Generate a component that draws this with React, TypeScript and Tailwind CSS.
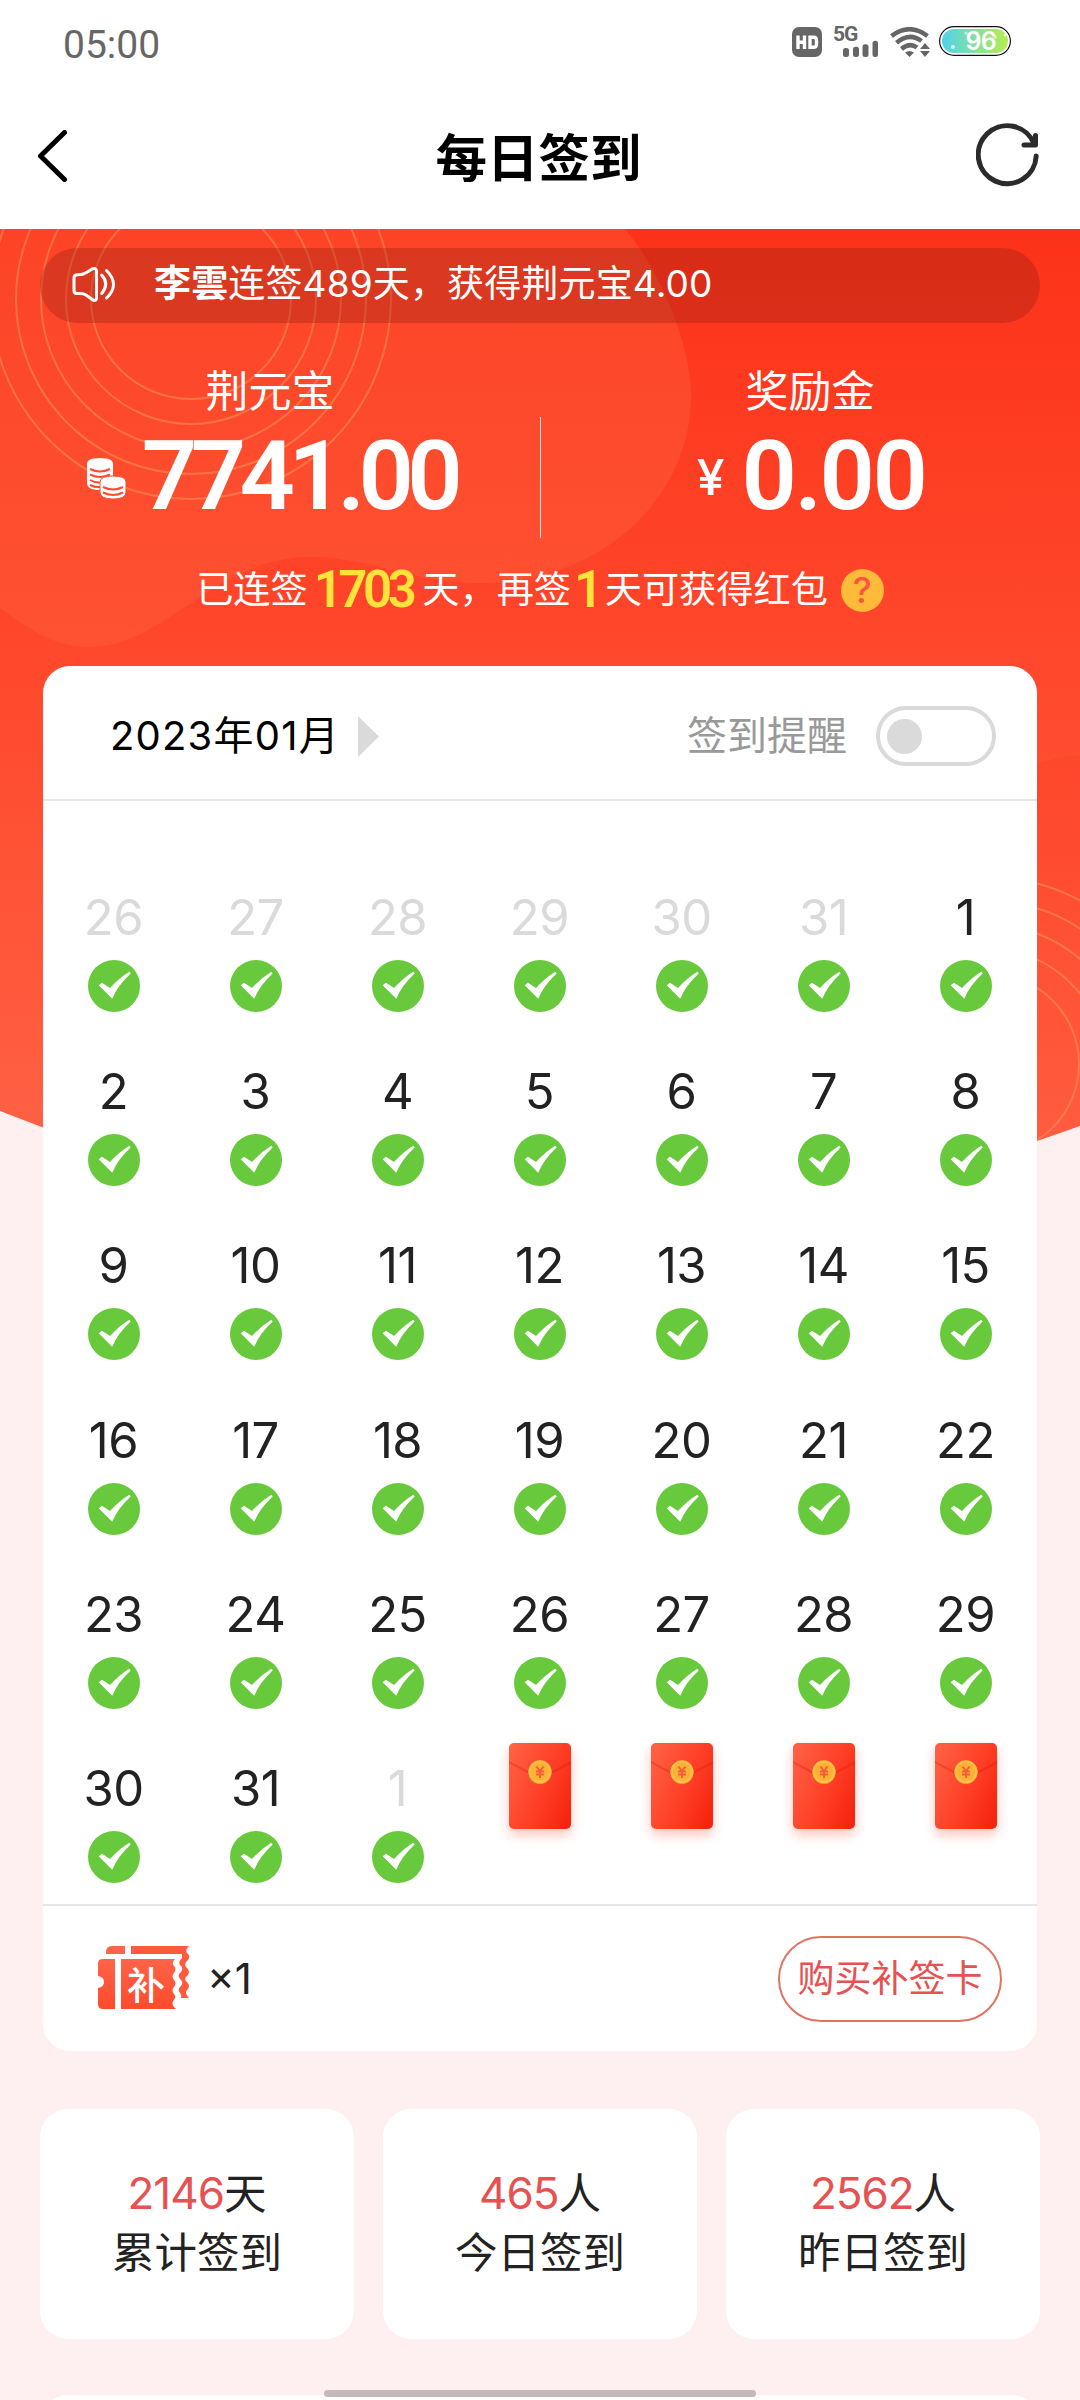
import { clsx } from 'clsx'

interface Day {
  label: string
  muted?: boolean
}

interface Stat {
  value: string
  unit: string
  label: string
}

const days: Day[] = [
  ...[26, 27, 28, 29, 30, 31].map((d) => ({ label: String(d), muted: true })),
  ...Array.from({ length: 31 }, (_, i) => ({ label: String(i + 1) })),
  { label: '1', muted: true },
]

const stats: Stat[] = [
  { value: '2146', unit: '天', label: '累计签到' },
  { value: '465', unit: '人', label: '今日签到' },
  { value: '2562', unit: '人', label: '昨日签到' },
]

function StatusBar() {
  return (
    <div className="flex h-[88px] items-start justify-between pr-[69px] pl-[63px]">
      <span className="mt-[23px] font-['Roboto'] text-[39px] leading-[44px] text-[#666]">05:00</span>
      <div className="mt-[26px] flex items-start">
        <svg width="30" height="30" viewBox="0 0 30 30" className="mt-px mr-[12px]">
          <rect width="30" height="30" rx="7" fill="#666" />
          <path d="M6 8.500v13.500M6 15.200h6.500M12.500 8.500v13.500M18 10.200h3.500q3 0 3 3v4q0 3-3 3H18z" fill="none" stroke="#fff" strokeWidth="3.400" />
        </svg>
        <div className="relative mt-px mr-[12px] h-[30px] w-[44px]">
          <span className="absolute top-[-3px] left-[-1px] font-['Roboto'] text-[21px] leading-[21px] font-bold tracking-[-1px] text-[#666]">5G</span>
          <svg width="44" height="30" viewBox="0 0 44 30" className="absolute inset-0" fill="#666">
            <rect x="9" y="21" width="6" height="9" rx="2.500" />
            <rect x="19" y="19.700" width="6" height="10.300" rx="2.500" />
            <rect x="28.500" y="17.300" width="6" height="12.700" rx="2.500" />
            <rect x="38.500" y="13.700" width="5.500" height="16.300" rx="2.500" />
          </svg>
        </div>
        <svg width="40" height="30" viewBox="0 0 40 30" className="mt-px mr-[9px]">
          <g fill="none" stroke="#666" strokeWidth="4.600">
            <path d="M1.500 9Q19.500-4.500 37.500 9" />
            <path d="M6.500 15.800Q19.500 4.800 31.500 14" />
            <path d="M11.500 22Q19.500 15 27 20.500" />
          </g>
          <path d="M15 25.500q4.500-3 9 0L19.500 30z" fill="#666" />
          <path d="M35 16l5 6h-10zM35 30l-5-6h10z" fill="#666" />
        </svg>
        <svg width="72" height="30" viewBox="0 0 72 30" className="overflow-visible">
          <defs>
            <linearGradient id="battery" x1="0" x2="1">
              <stop offset="0" stopColor="#4fd3ea" />
              <stop offset="0.5" stopColor="#86dfa0" />
              <stop offset="1" stopColor="#b5ec52" />
            </linearGradient>
          </defs>
          <rect x="0.600" y="0.600" width="70.800" height="28.800" rx="14.400" fill="#fff" stroke="#111" strokeWidth="1.200" />
          <rect x="3" y="3" width="66" height="24" rx="12" fill="url(#battery)" />
          <circle cx="14" cy="21" r="2" fill="#fff" opacity=".8" />
          <circle cx="27" cy="7" r="1.500" fill="#fff" opacity=".6" />
          <circle cx="56" cy="11" r="2" fill="#fff" opacity=".5" />
          <circle cx="66" cy="9" r="1.500" fill="#fff" opacity=".7" />
          <text x="26.500" y="24" fill="#fff" fontFamily="Inter" fontWeight="600" fontSize="25" letterSpacing="-0.8">96</text>
        </svg>
      </div>
    </div>
  )
}

function TitleBar() {
  return (
    <div className="flex h-[141px] items-start justify-between pr-[40px] pl-[37px]">
      <svg width="64" height="52" viewBox="0 0 64 52" className="mt-[42px]">
        <path d="M27.500 2.500L3.500 26l24 23.500" fill="none" stroke="#000" strokeWidth="5" strokeLinecap="round" strokeLinejoin="round" />
      </svg>
      <h1 className="mt-[35px] text-[51.5px] leading-[70px] font-bold text-black">每日签到</h1>
      <svg width="64" height="66" viewBox="0 0 64 66" className="mt-[35px]" fill="none" stroke="#2b2b2b" strokeWidth="5" strokeLinecap="round">
        <path d="M60.200 33A29 29 0 1 1 58 20.500" />
        <path d="M59.500 12.500V22H48" strokeLinejoin="round" />
      </svg>
    </div>
  )
}

function Backdrop() {
  return (
    <svg width="1080" height="930" viewBox="0 229 1080 930" className="absolute top-0 left-0">
      <defs>
        <linearGradient id="red" x1="0" y1="0" x2="0" y2="1">
          <stop offset="0" stopColor="#fc3218" />
          <stop offset="0.450" stopColor="#ff492d" />
          <stop offset="1" stopColor="#ff6649" />
        </linearGradient>
        <linearGradient id="shade" x1="0" y1="0" x2="0" y2="1">
          <stop offset="0" stopColor="#fd3d24" />
          <stop offset="1" stopColor="#ff5538" />
        </linearGradient>
      </defs>
      <path d="M0 229H1080V1126Q810 1240 540 1240T0 1111z" fill="url(#red)" />
      <path d="M1080 755Q1050 757 1020 770V1150L1080 1126z" fill="url(#shade)" opacity=".4" />
      <path d="M0 229H625C660 270 691 345 691 395C691 500 600 583 480 583C410 583 370 557 310 557C215 557 165 647 90 647C50 647 25 625 0 608z" fill="#ff6a45" opacity=".32" />
      <g fill="none" stroke="#ff9a5c" strokeWidth="2" opacity=".5">
        {[100, 125, 150, 175, 200].map((r) => (
          <circle key={r} cx="191" cy="299" r={r} />
        ))}
        {[90, 115, 139, 163, 187].map((r) => (
          <circle key={r} cx="989" cy="1064" r={r} />
        ))}
      </g>
      <path d="M0 1111L60 1134V1160H0zM1080 1126L1020 1147V1160H1080z" fill="#fef0f0" />
    </svg>
  )
}

function Notice() {
  return (
    <div className="mx-[40px] flex h-[75px] items-center rounded-full bg-[#991f14]/35 pl-[31px] text-[37px] leading-[54px] text-white">
      <svg width="46" height="38" viewBox="0 0 46 38" fill="none" stroke="#fff" strokeWidth="3" strokeLinejoin="round" strokeLinecap="round">
        <path d="M3 11q0-3 3-3.200Q12 8 15.500 5.500L21.500 1.800Q25.500 0.500 25.500 4V31Q25.500 34.500 22 33L15 28Q13 26.500 9 26.500H6Q3 26.500 3 23.500z" />
        <path d="M30.700 8q8 9 0 18.500M35.500 3.500q14 14 0 27.500" />
      </svg>
      <p className="-mt-[3px] ml-[37px] tracking-[0.15px] whitespace-nowrap">
        <b>李雲</b>连签489天，获得荆元宝4.00
      </p>
    </div>
  )
}

function CoinsIcon() {
  return (
    <svg width="40" height="42" viewBox="0 0 40 42" className="mt-[5px]">
      <path d="M0 6Q0 0 13 0T26 6V24Q26 32 13 32T0 25z" fill="#fff" />
      <path d="M3 11q10 5 20 0M3 16.500q10 5 20 0M3 22q5 3 11 2.500M3 27q5 2.500 10 2" fill="none" stroke="#ff4b2e" strokeWidth="2" />
      <path d="M13 24Q13 18 26 18T39 24V34Q39 41 26 41T13 34z" fill="#fff" stroke="#ff4b2e" strokeWidth="1" />
      <path d="M16 29q10 5 20 0M16 34.500q10 5 20 0" fill="none" stroke="#ff4b2e" strokeWidth="2" />
    </svg>
  )
}

function Balance() {
  return (
    <div className="relative grid h-[214px] grid-cols-2 pt-[41px] text-center text-white">
      <div>
        <div className="text-[43px] leading-[54px]">荆元宝</div>
        <div className="flex items-center justify-center pt-[12px]">
          <CoinsIcon />
          <span className="-mr-[3px] ml-[15px] font-['Roboto'] text-[97px] leading-[92px] font-semibold tracking-[-6.5px]">7741.00</span>
        </div>
      </div>
      <div>
        <div className="text-[43px] leading-[54px]">奖励金</div>
        <div className="flex items-center justify-center pt-[12px]">
          <span className="mt-[2px] text-[50px] leading-[60px] font-medium">¥</span>
          <span className="-mr-[2px] ml-[17px] font-['Roboto'] text-[97px] leading-[92px] font-semibold tracking-[-2.5px]">0.00</span>
        </div>
      </div>
      <div className="absolute top-[94px] left-[540px] h-[121px] w-px bg-white/80" />
    </div>
  )
}

function Hint() {
  return (
    <div className="flex h-[54px] items-center justify-center pt-px text-[37.2px] leading-[54px] whitespace-nowrap text-white">
      <span>已连签</span>
      <span className="mr-[10px] ml-[6px] font-['Roboto'] text-[51px] font-semibold tracking-[-4.5px] text-[#ffe23a]">1703</span>
      <span>天，再签</span>
      <span className="mr-[6px] ml-[3px] font-['Roboto'] text-[51px] font-semibold tracking-[-4.5px] text-[#ffe23a]">1</span>
      <span>天可获得红包</span>
      <span className="mt-[2px] ml-[13px] flex h-[43px] w-[43px] items-center justify-center rounded-full bg-[#ffba3a] text-[36px] leading-[43px] font-medium text-[#fb5540]">?</span>
    </div>
  )
}

function CheckMark() {
  return (
    <svg width="52" height="52" viewBox="0 0 52 52">
      <circle cx="26" cy="26" r="26" fill="#69c93d" />
      <path d="M10.700 25.300L14 22.700L22 28Q31 18 41.300 11.700L42.700 13.500Q30 25 24.200 38.700z" fill="#fff" />
    </svg>
  )
}

function RedPacket({ id }: { id: number }) {
  return (
    <svg width="102" height="126" viewBox="-20 -20 102 126" className="mt-[13px]">
      <defs>
        <linearGradient id={`packet${id}`} x1="0" y1="0.200" x2="1" y2="0.800">
          <stop offset="0" stopColor="#ff5f42" />
          <stop offset="0.600" stopColor="#ff3c25" />
          <stop offset="1" stopColor="#f5250e" />
        </linearGradient>
        <filter id={`glow${id}`} x="-40%" y="-40%" width="180%" height="180%">
          <feGaussianBlur stdDeviation="6" />
        </filter>
      </defs>
      <rect x="0" y="6" width="62" height="86" rx="6" fill="#ff6a55" opacity=".4" filter={`url(#glow${id})`} />
      <rect width="62" height="86" rx="5" fill={`url(#packet${id})`} />
      <path d="M0 18L20 28.500Q31 34 42 28.500L62 18V21L42 31Q31 37 20 31L0 20z" fill="#d91e0c" opacity=".35" />
      <circle cx="31" cy="29.500" r="11.500" fill="#e5932a" />
      <circle cx="31" cy="28.800" r="11.500" fill="#ffc244" />
      <circle cx="31" cy="28.800" r="9.200" fill="#fdb036" />
      <path d="M27.500 23.500L31 28l3.500-4.500M31 28v7M27 28.500h8M27 31.500h8" fill="none" stroke="#f2603a" strokeWidth="2" />
    </svg>
  )
}

function Calendar() {
  return (
    <div className="mt-[88px] grid auto-rows-[174.2px] grid-cols-7 justify-items-center">
      {days.map((day, i) => (
        <div key={i} className="flex flex-col items-center">
          <span className={clsx('-ml-px text-[49px] leading-[56px] tracking-[-0.5px]', day.muted ? 'text-[#dadada]' : 'text-[#222]')}>{day.label}</span>
          <div className="mt-[14px]">
            <CheckMark />
          </div>
        </div>
      ))}
      {[0, 1, 2, 3].map((id) => (
        <div key={id} className="-mt-[51px]">
          <RedPacket id={id} />
        </div>
      ))}
    </div>
  )
}

function TicketIcon() {
  return (
    <svg width="92" height="64" viewBox="0 0 92 64" className="-mt-[2px]">
      <defs>
        <linearGradient id="ticket" x1="0" y1="0" x2="0" y2="1">
          <stop offset="0" stopColor="#ff6448" />
          <stop offset="1" stopColor="#ff4a2d" />
        </linearGradient>
      </defs>
      <path d="M8 8V6Q8 0 14 0H27V8z" fill="#ff6448" />
      <path d="M33 0H91Q86 5 90 8Q93 11 89 15Q85 19 89 22Q93 26 89 30Q85 33 89 36Q93 40 89 44Q86 47 91 52H83Q84 49 82 47Q79 43 83 40Q86 36 82 33Q79 29 83 26Q86 22 82 19Q80 16 84 12V8H33z" fill="#ff5a3d" />
      <path d="M5 13H17V63H5Q0 63 0 58V42Q6 41 6 36T0 30V17Q0 13 5 13z" fill="url(#ticket)" />
      <path d="M23 13H77Q73 17 76 20Q79 23 76 27Q73 30 76 34Q79 37 76 41Q73 44 76 48Q79 51 75 55Q73 59 78 63H23z" fill="url(#ticket)" />
      <text x="29" y="53" fontSize="38" fontWeight="500" fill="#fff">补</text>
    </svg>
  )
}

function CalendarCard() {
  return (
    <div className="mx-[43px] mt-[50px] h-[1385px] rounded-[27px] bg-white">
      <div className="flex h-[135px] items-center border-b-2 border-[#e6e6e6] pr-[41px] pl-[67px] text-[40px] leading-[56px]">
        <span className="mt-[7px] tracking-[1.2px] text-black">2023年01月</span>
        <svg width="21" height="41" viewBox="0 0 21 41" className="mt-[7px] ml-[18px]">
          <path d="M0 0L21 20.500L0 41z" fill="#dadada" />
        </svg>
        <span className="mt-[7px] ml-auto text-[#999]">签到提醒</span>
        <button className="mt-[7px] ml-[29px] flex h-[60px] w-[120px] items-center rounded-full border-4 border-[#dadada] pl-[7px]">
          <span className="h-[35px] w-[35px] rounded-full bg-[#dadada]" />
        </button>
      </div>
      <div className="h-[1105px] border-b-2 border-[#e6e6e6]">
        <div className="h-px" />
        <Calendar />
      </div>
      <div className="flex h-[145px] items-center justify-between pr-[35px] pl-[55px]">
        <div className="flex items-center">
          <TicketIcon />
          <span className="ml-[17px] text-[42px] leading-[56px] text-[#222]">×1</span>
        </div>
        <button className="h-[86px] w-[224px] rounded-full border-2 border-[#e07463] text-[37px] leading-[54px] text-[#e65151]">
          购买补签卡
        </button>
      </div>
    </div>
  )
}

function StatCard({ stat }: { stat: Stat }) {
  return (
    <div className="flex h-[230px] flex-col items-center rounded-[28px] bg-white pt-[55px] text-[42.5px] leading-[59px] text-[#222]">
      <div>
        <span className="text-[44px] tracking-[-1px] text-[#e65151]">{stat.value}</span>
        {stat.unit}
      </div>
      <div>{stat.label}</div>
    </div>
  )
}

export default function App() {
  return (
    <div className="relative h-[2400px] w-[1080px] overflow-hidden bg-white font-['Inter','Noto_Sans_CJK_SC',sans-serif]">
      <StatusBar />
      <TitleBar />
      <main className="relative h-[2171px] overflow-hidden bg-[#fef0f0]">
        <Backdrop />
        <div className="relative flex flex-col pt-[19px]">
          <Notice />
          <Balance />
          <div className="h-[25px]" />
          <Hint />
          <CalendarCard />
          <div className="mx-[40px] mt-[58px] grid grid-cols-3 gap-[29px]">
            {stats.map((stat) => (
              <StatCard key={stat.label} stat={stat} />
            ))}
          </div>
          <div className="mx-[40px] mt-[56px] h-[100px] rounded-[28px] bg-white" />
        </div>
      </main>
      {/* Home indicator */}
      <div className="absolute bottom-[3px] left-[324px] h-[7px] w-[432px] rounded-full bg-[#c3b9b9]" />
    </div>
  )
}
